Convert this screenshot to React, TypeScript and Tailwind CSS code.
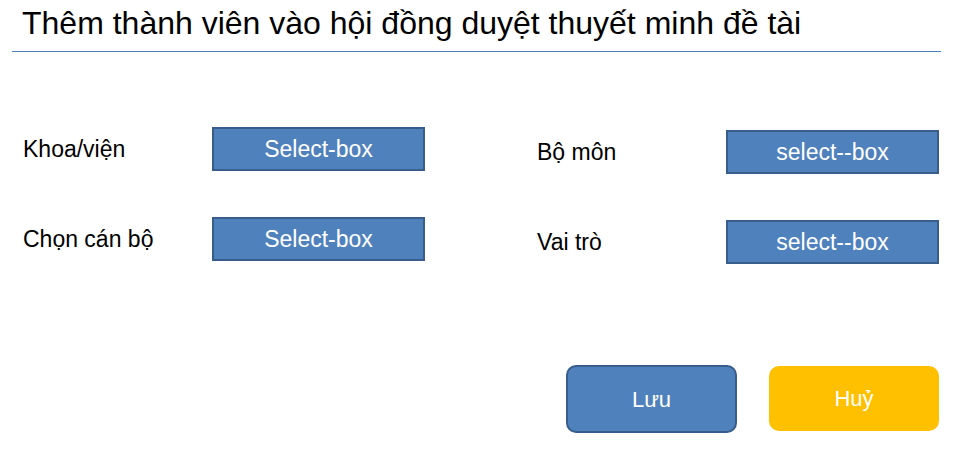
const font = { fontFamily: '"Liberation Sans", Arial, sans-serif' };

function SelectBox({ label }: { label: string }) {
    return (
        <div className="w-[213px] h-[44px] bg-[#4f81bd] border-2 border-[#385d8a] flex items-center justify-center text-white text-[23px]">
            {label}
        </div>
    );
}

function Field({ label, box }: { label: string; box: string }) {
    return (
        <div className="flex items-center h-[44px]">
            <div className="w-[189px] text-[23px] text-black">{label}</div>
            <SelectBox label={box} />
        </div>
    );
}

export default function App() {
    return (
        <div className="w-[953px] h-[451px] bg-white relative overflow-hidden" style={font}>
            <div className="mx-[12px] h-[52px] border-b border-[#4a7ebb]">
                <h1 className="pl-[10px] pt-[3px] text-[32px] leading-[40px] text-black">
                    Thêm thành viên vào hội đồng duyệt thuyết minh đề tài
                </h1>
            </div>
            <div className="flex pt-[75px] pl-[23px]">
                <div className="flex flex-col gap-[46px] w-[514px]">
                    <Field label="Khoa/viện" box="Select-box" />
                    <Field label="Chọn cán bộ" box="Select-box" />
                </div>
                <div className="flex flex-col gap-[46px] mt-[3px]">
                    <Field label="Bộ môn" box="select--box" />
                    <Field label="Vai trò" box="select--box" />
                </div>
            </div>
            <div className="flex justify-end gap-[32px] pr-[14px] mt-[101px]">
                <button className="w-[171px] h-[68px] rounded-[10px] bg-[#4f81bd] border-2 border-[#385d8a] text-white text-[22px]">
                    Lưu
                </button>
                <button className="w-[170px] h-[65px] mt-[1px] rounded-[10px] bg-[#ffc000] text-white text-[22px]">
                    Huỷ
                </button>
            </div>
        </div>
    );
}
